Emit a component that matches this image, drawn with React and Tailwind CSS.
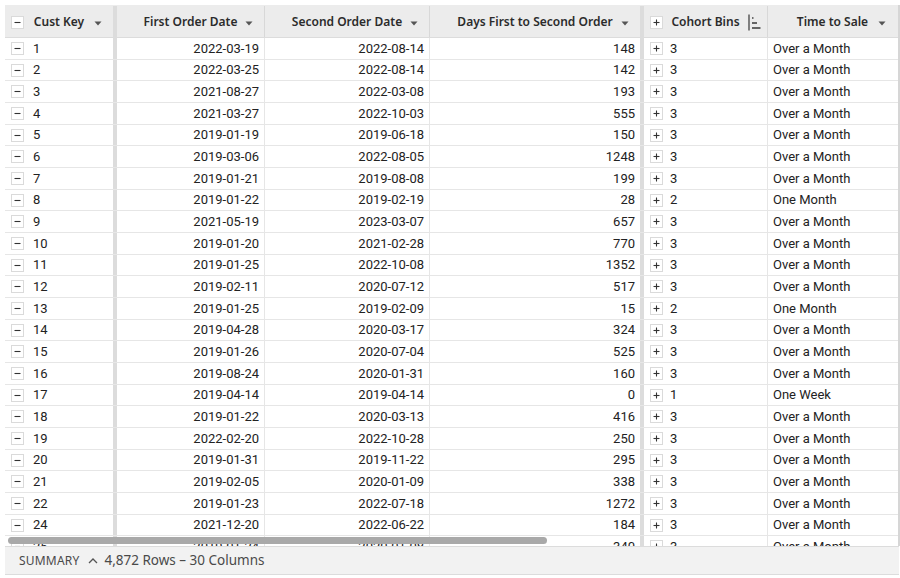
import React from "react";

const rows = [
  [1, "2022-03-19", "2022-08-14", 148, 3, "Over a Month"],
  [2, "2022-03-25", "2022-08-14", 142, 3, "Over a Month"],
  [3, "2021-08-27", "2022-03-08", 193, 3, "Over a Month"],
  [4, "2021-03-27", "2022-10-03", 555, 3, "Over a Month"],
  [5, "2019-01-19", "2019-06-18", 150, 3, "Over a Month"],
  [6, "2019-03-06", "2022-08-05", 1248, 3, "Over a Month"],
  [7, "2019-01-21", "2019-08-08", 199, 3, "Over a Month"],
  [8, "2019-01-22", "2019-02-19", 28, 2, "One Month"],
  [9, "2021-05-19", "2023-03-07", 657, 3, "Over a Month"],
  [10, "2019-01-20", "2021-02-28", 770, 3, "Over a Month"],
  [11, "2019-01-25", "2022-10-08", 1352, 3, "Over a Month"],
  [12, "2019-02-11", "2020-07-12", 517, 3, "Over a Month"],
  [13, "2019-01-25", "2019-02-09", 15, 2, "One Month"],
  [14, "2019-04-28", "2020-03-17", 324, 3, "Over a Month"],
  [15, "2019-01-26", "2020-07-04", 525, 3, "Over a Month"],
  [16, "2019-08-24", "2020-01-31", 160, 3, "Over a Month"],
  [17, "2019-04-14", "2019-04-14", 0, 1, "One Week"],
  [18, "2019-01-22", "2020-03-13", 416, 3, "Over a Month"],
  [19, "2022-02-20", "2022-10-28", 250, 3, "Over a Month"],
  [20, "2019-01-31", "2019-11-22", 295, 3, "Over a Month"],
  [21, "2019-02-05", "2020-01-09", 338, 3, "Over a Month"],
  [22, "2019-01-23", "2022-07-18", 1272, 3, "Over a Month"],
  [24, "2021-12-20", "2022-06-22", 184, 3, "Over a Month"],
  [25, "2019-01-24", "2020-01-08", 340, 3, "Over a Month"],
];

function Caret() {
  return (
    <svg width="8" height="5" viewBox="0 0 8 5" className="absolute right-[11px] top-[15px]">
      <path d="M0.5 0.5 L7.5 0.5 L4 4.5 Z" fill="#555" />
    </svg>
  );
}

function Box({ sign }) {
  return (
    <span className="w-[13px] h-[13px] border border-[#dadada] bg-white flex items-center justify-center shrink-0">
      <svg width="9" height="9" viewBox="0 0 9 9">
        <path d="M1.5 4.5 H7.5" stroke="#333" strokeWidth="1.1" />
        {sign === "+" && <path d="M4.5 1.5 V7.5" stroke="#333" strokeWidth="1.1" />}
      </svg>
    </span>
  );
}

function SortIcon() {
  return (
    <svg width="13" height="17" viewBox="0 0 13 17" className="absolute right-[6px] top-[8px]">
      <path d="M1 0.5 V16.5" stroke="#444" strokeWidth="1.3" />
      <path d="M4 4 H5.5" stroke="#444" strokeWidth="1.6" />
      <path d="M4 9 H9" stroke="#444" strokeWidth="1.6" />
      <path d="M4 14 H12.5" stroke="#444" strokeWidth="1.6" />
    </svg>
  );
}

function Sep() {
  return <div className="w-[4px] shrink-0 bg-[#dcdcdc]" />;
}

export default function App() {
  return (
    <div className="w-[900px] h-[578px] bg-white flex flex-col pt-[5px] pl-[5px] font-['Roboto',sans-serif] text-[#222]">
      <div className="flex-1 flex flex-col border-r-[2px] border-[#d6d6d6] relative overflow-hidden">
        {/* header */}
        <div className="flex h-[33px] shrink-0 bg-[#ececec] border-b border-[#dcdcdc] pt-[1px] font-['Noto_Sans',sans-serif] text-[12px] font-semibold text-[#2b2b2b]">
          <div className="w-[108px] relative flex items-center justify-center">
            <span className="absolute left-[6px] top-[10px]"><Box sign="-" /></span>
            Cust Key
            <Caret />
          </div>
          <Sep />
          <div className="w-[148px] relative flex items-center justify-center border-r border-[#d8d8d8]">
            First Order Date
            <Caret />
          </div>
          <div className="w-[165px] relative flex items-center justify-center border-r border-[#d8d8d8]">
            Second Order Date
            <Caret />
          </div>
          <div className="w-[210px] relative flex items-center justify-center">
            Days First to Second Order
            <Caret />
          </div>
          <Sep />
          <div className="w-[124px] relative flex items-center justify-center border-r border-[#d8d8d8]">
            <span className="absolute left-[6px] top-[10px]"><Box sign="+" /></span>
            Cohort Bins
            <SortIcon />
          </div>
          <div className="w-[129px] relative flex items-center justify-center">
            Time to Sale
            <Caret />
          </div>
        </div>

        {/* body */}
        <div className="flex-1 overflow-hidden text-[13px]">
          {rows.map((r) => (
            <div key={r[0]} className="flex h-[21.68px] border-b border-[#e6e6e6]">
              <div className="w-[108px] flex items-center gap-[9px] pl-[6px]">
                <Box sign="-" />
                {r[0]}
              </div>
              <Sep />
              <div className="w-[148px] flex items-center justify-end pr-[5px] border-r border-[#e6e6e6]">{r[1]}</div>
              <div className="w-[165px] flex items-center justify-end pr-[5px] border-r border-[#e6e6e6]">{r[2]}</div>
              <div className="w-[210px] flex items-center justify-end pr-[5px]">{r[3]}</div>
              <Sep />
              <div className="w-[124px] flex items-center gap-[7px] pl-[6px] border-r border-[#e6e6e6]">
                <Box sign="+" />
                {r[4]}
              </div>
              <div className="w-[129px] flex items-center pl-[5px]">{r[5]}</div>
            </div>
          ))}
        </div>

        {/* horizontal scrollbar */}
        <div className="absolute left-[3px] bottom-[2px] w-[539px] h-[7px] rounded-full bg-[#a9a9a9]" />
      </div>

      {/* summary bar */}
      <div className="h-[29px] shrink-0 mr-[1px] mb-[3px] bg-[#f2f2f2] border-t border-b border-[#dcdcdc] flex items-center pl-[14px] font-['Noto_Sans',sans-serif] text-[#4a4a4a]">
        <span className="text-[12px] tracking-[0.2px]">SUMMARY</span>
        <svg width="10" height="7" viewBox="0 0 10 7" className="ml-[9px] mr-[6px]">
          <path d="M1 6 L5 2 L9 6" stroke="#555" strokeWidth="1.3" fill="none" />
        </svg>
        <span className="text-[13.5px]">4,872 Rows – 30 Columns</span>
      </div>
    </div>
  );
}
